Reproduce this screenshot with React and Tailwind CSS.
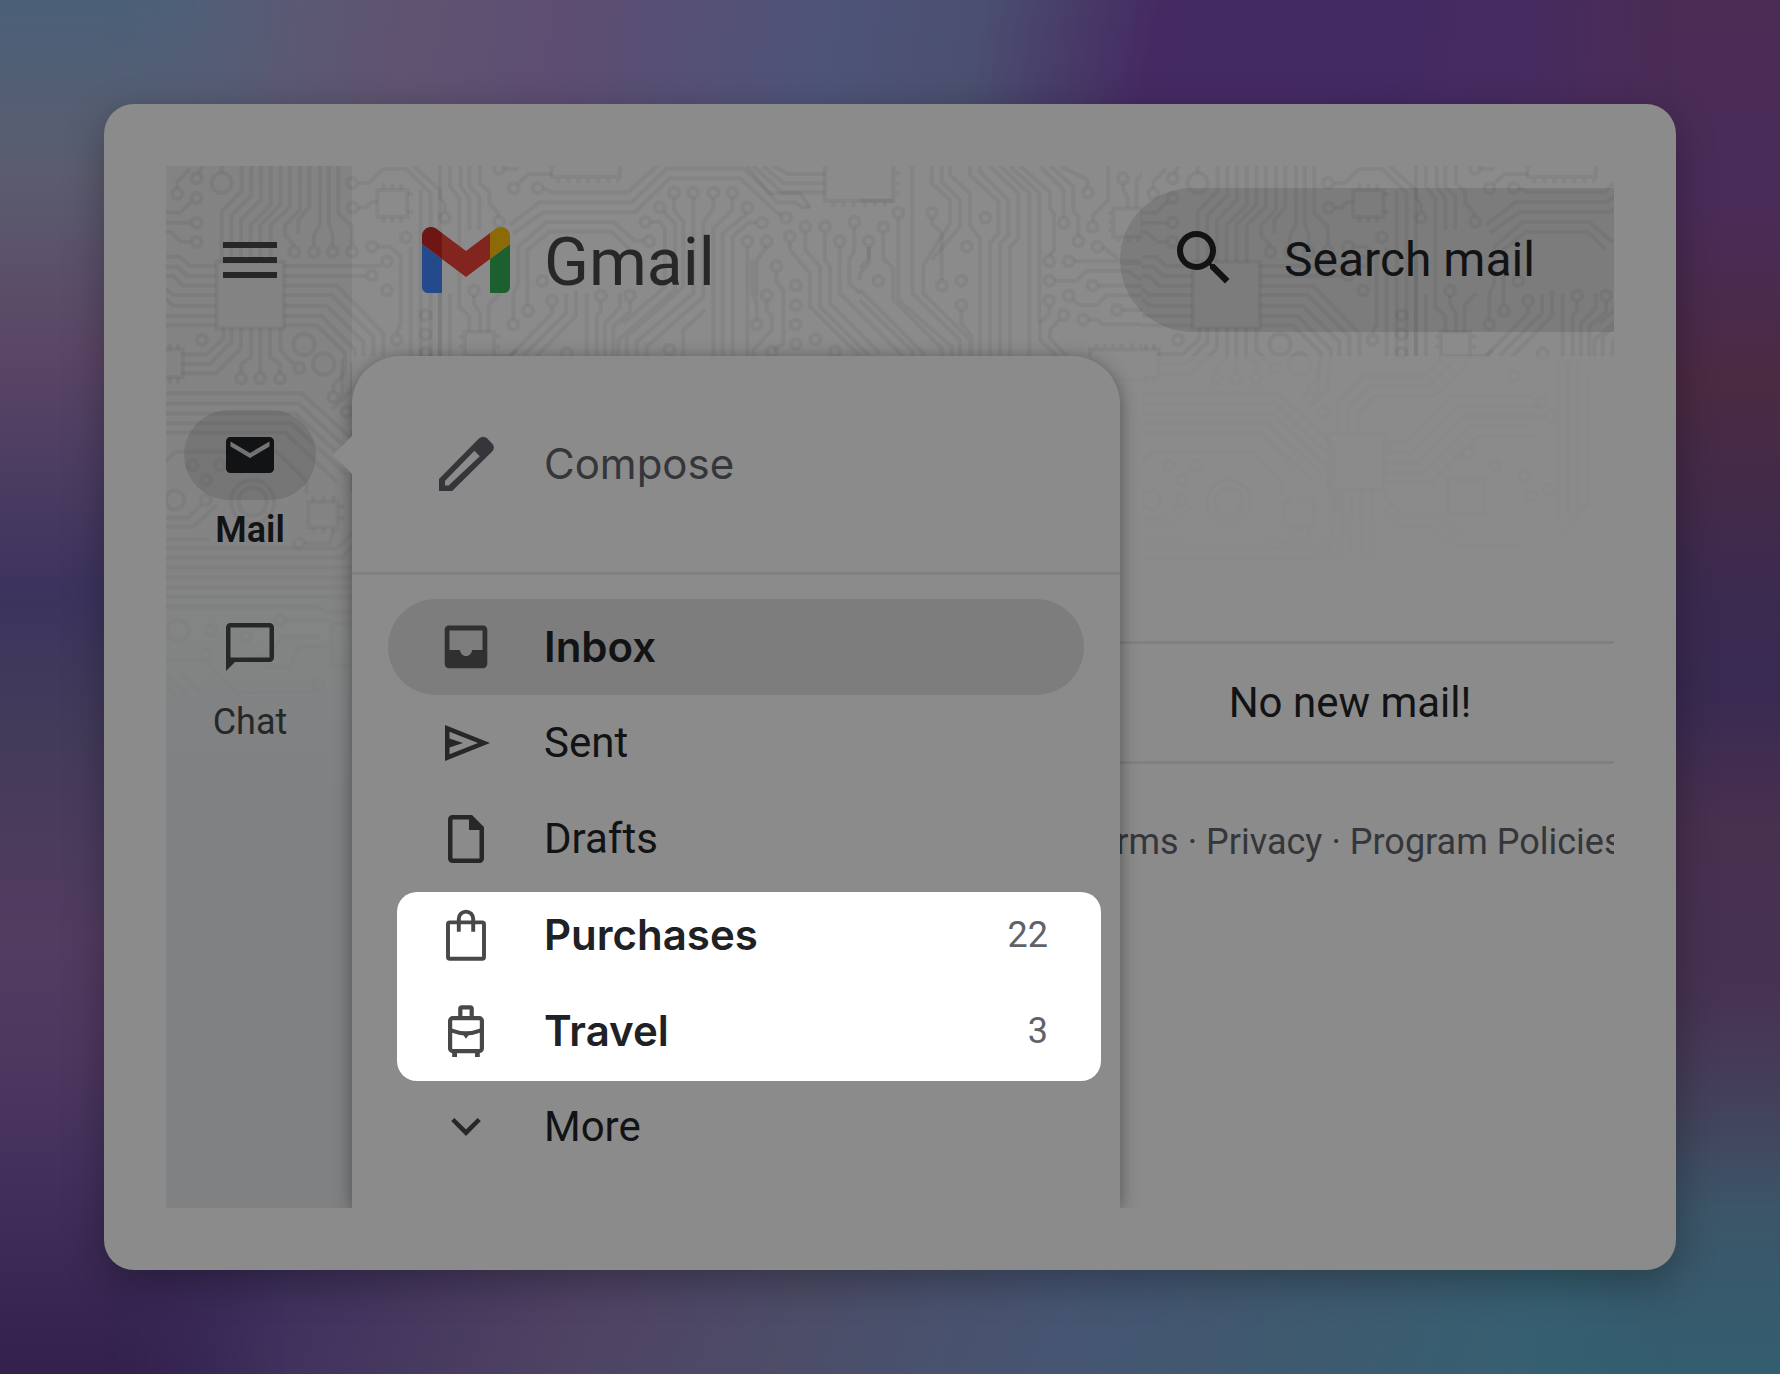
import { useState } from "react";

const menuItems = [
  { name: "Inbox", icon: InboxIcon },
  { name: "Sent", icon: SentIcon },
  { name: "Drafts", icon: DraftsIcon },
];

const highlighted = [
  { name: "Purchases", icon: PurchasesIcon, count: 22 },
  { name: "Travel", icon: TravelIcon, count: 3 },
];

function InboxIcon() {
  return (
    <svg viewBox="0 0 20 20" className="size-15 shrink-0 text-[#303030]" fill="currentColor" fillRule="evenodd">
      <path d="M4.3 2.8h11.4a1.4 1.4 0 0 1 1.4 1.4v11.5a1.4 1.4 0 0 1-1.4 1.4H4.3a1.4 1.4 0 0 1-1.4-1.4V4.2a1.4 1.4 0 0 1 1.4-1.4ZM4.5 4.5V11H8c0 1.1.9 2 2 2s2-.9 2-2h3.5V4.5Z" />
    </svg>
  );
}

function SentIcon() {
  return (
    <svg viewBox="0 0 20 20" className="size-15 shrink-0 text-[#262727]" fill="currentColor" fillRule="evenodd">
      <path d="M3 16V4l15 6L3 16Zm1.5-2.25L14 10 4.5 6.25V8.5L9 10l-4.5 1.5v2.25Z" />
    </svg>
  );
}

function DraftsIcon() {
  return (
    <svg viewBox="0 0 20 20" className="size-15 shrink-0 text-[#262727]" fill="currentColor" fillRule="evenodd">
      <path d="M5.5 2H12l4 4v10.5a1.5 1.5 0 0 1-1.5 1.5h-9A1.5 1.5 0 0 1 4 16.5v-13A1.5 1.5 0 0 1 5.5 2ZM11 3.5H5.5v13h9V7H11V3.5Z" />
    </svg>
  );
}

function PurchasesIcon() {
  return (
    <svg viewBox="0 0 20 20" className="size-15 shrink-0 text-[#474848]" fill="none" stroke="currentColor" strokeWidth="1.3">
      <rect x="4" y="5.8" width="12" height="12.1" rx=".6" />
      <path d="M7.6 8.9V4.6a2.4 2.4 0 0 1 4.8 0v4.3" />
    </svg>
  );
}

function TravelIcon() {
  return (
    <svg viewBox="0 0 20 20" className="size-15 shrink-0 text-[#474848]" fill="none" stroke="currentColor" strokeWidth="1.4">
      <rect x="4.7" y="5.7" width="10.6" height="11" rx=".9" />
      <path d="M8.1 5.7V2.6q0-.5.5-.5h2.8q.5 0 .5.5v3.1" />
      <path d="M5 9.8c1.6.6 3.3 1 5 1s3.4-.4 5-1" />
      <path d="m8.9 11.1 1.1 1.5 1.1-1.5Z" fill="currentColor" stroke="none" />
      <path d="M6.2 17v1.7M13.8 17v1.7" strokeWidth="1.6" />
    </svg>
  );
}

function ChevronIcon() {
  return (
    <svg viewBox="0 0 20 20" className="size-15 shrink-0 text-[#262727]" fill="none" stroke="currentColor" strokeWidth="1.5">
      <path d="M5.6 7.5 10 11.9l4.4-4.4" />
    </svg>
  );
}

function PencilIcon() {
  return (
    <svg viewBox="0 0 24 24" className="size-18 shrink-0" fill="currentColor" fillRule="evenodd">
      <path d="M3 21v-4L16.4 3.4q.6-.5 1.3-.5t1.3.5l1.7 1.8q.6.6.6 1.3t-.6 1.3L7.4 21ZM5 19.2h1.2l10.4-9.8-1.8-1.8L5 17.7Z" />
    </svg>
  );
}

function GmailLogo() {
  return (
    <svg viewBox="52 42 88 66" className="h-[66px] w-[88px] shrink-0">
      <path fill="#244a8c" d="M58 108h14V74L52 59v43c0 3.32 2.69 6 6 6" />
      <path fill="#1d6030" d="M120 108h14c3.32 0 6-2.69 6-6V59l-20 15" />
      <path fill="#8d6a08" d="M120 48v26l20-15v-8c0-7.42-8.47-11.65-14.4-7.2" />
      <path fill="#83251f" d="M72 74V48l24 18 24-18v26L96 92" />
      <path fill="#6e1613" d="M52 51v8l20 15V48l-5.6-4.2c-5.94-4.45-14.4-.22-14.4 7.2" />
    </svg>
  );
}

// Circuit board traces, drawn in five areas of one repeating tile
const traces = [
  {
    transform: "translate(-76 -76) scale(.33333)",
    lines: [
      "M262 294V275L300 235M325 250 340 228M395 228V248M305 335 270 368H228M303 398H228M303 456H275L240 425H228",
      "M455 228V302L395 365V515M484 228V316L424 377V515M513 228V330L453 390V515M542 228V345L482 405V515M571 228V345L511 405V515M600 228V350L542 407V515M630 228V360L585 407V435L613 467",
      "M658 228V350L625 390V430M690 228V405L672 435V467M717 228V405L728 435V467M745 228V370L786 410V467",
      "M228 500H270L300 528H380M228 530H262L292 558H380M228 558H250L278 587H380M228 597L250 615H380M228 626L250 647H380M228 678H380M228 706H380",
      "M582 528H873M582 558H829M582 587H740L880 730V798M582 615H725L850 740V798M582 647H710L820 755V798M582 678H695L795 780V840M582 706H680L765 790V850L730 885V905",
      "M400 715V745L350 793H275M425 715V755L360 822H275M453 715V775L378 850H275M483 715V800L453 825V848M511 715V848M540 715V800L570 825V848M571 715V780L610 822",
      "M803 279H835L880 237H950L1022 310V798M970 228 1050 300V798M805 353H825L845 337H862M863 470H900L932 500V700L920 730M962 470V798M992 300V798",
      "M862 300H952V380H862ZM380 515H582V715H380ZM228 778H278V862H228",
      "M880 298V280M907 298V280M934 298V280M880 382V398M907 382V398M934 382V398M952 312H968M952 365H968M240 862V880M264 862V880M240 778V762M264 778V762",
    ],
    circles: [[262, 311], [320, 265], [320, 324], [320, 398], [320, 456], [395, 279, 30], [613, 485], [672, 485], [728, 485], [786, 485], [891, 515], [846, 556], [336, 749], [642, 763, 32], [701, 822, 32], [453, 865], [511, 865], [570, 865], [628, 834], [786, 279], [788, 353], [846, 470], [920, 749], [891, 601]],
  },
  {
    transform: "translate(234 -16) scale(.33333)",
    lines: [
      "M120 48V140L135 165V185M150 48V110L178 145V470L208 500V545M182 48V110L208 145V240M208 48V110L238 140V240M240 48V100L268 125V160L295 190V200M120 300V618M150 430V618",
      "M314 56H355M352 103 385 72H455M430 114 455 127H685L770 48M330 225 418 157H695L800 55H1030L1110 130H1200L1230 172M340 250 430 187H705L808 85H1020L1130 187 1145 195M355 400V290L440 216H640L705 272H730",
      "M1040 48 1130 157H1185L1205 172H1230M1060 48 1145 127H1275M1090 48 1150 100H1275M1120 48 1165 72H1275",
      "M382 465V300L450 245H635L690 300M340 507V430L355 400M222 438V460L240 490V545M266 545V465L300 430M456 470V490L330 618M498 430V490L370 618M528 420V498L410 618M603 455V480L590 500V618M690 455V485L640 530V618M560 430V618M615 618V520L660 470V430",
      "M822 145V180L850 215V410L680 560V618M880 145V430L710 575V618M940 145V175L910 215V440L740 590V618M997 145V180L940 235V618M1042 190 968 250V618M1070 218H1045L998 260V618M790 185 825 220V420L655 570V618M753 216H780L795 235V410L670 520M1042 292V618",
      "M1100 292 1070 330V440M1129 365V395L1150 420V580L1120 600M1100 453V480L1115 500V540L1060 600V618M1070 507V460L1058 430V330M280 618H330L350 600M850 618V540L915 480",
      "M1170 278V300L1230 370V470L1380 618M1216 248V300L1260 350V470L1408 618M1275 248V330L1290 350V460L1440 610M1319 292V430L1380 490M1363 234V300L1348 330V400L1380 430M1407 292V340L1380 370V390",
      "M455 20H660V80H455ZM1480 152H1275V20M195 545H282V618H195ZM475 80V98M505 80V98M535 80V98M565 80V98M595 80V98M625 80V98M655 80V98M1300 152V170M1330 152V170M1360 152V170M195 560H178M195 590H178M282 560H300M282 590H300",
    ],
    circles: [[18, 262], [135, 203], [297, 216], [297, 56], [341, 116], [413, 114], [1158, 203], [748, 274], [384, 482], [340, 524], [222, 422], [456, 452], [603, 437], [690, 437], [427, 393], [77, 495], [77, 553], [77, 608], [500, 610], [808, 600], [822, 128], [880, 128], [940, 128], [997, 128], [1042, 173], [1086, 218], [779, 172], [736, 216], [1042, 274], [1100, 274], [1129, 348], [1100, 436], [1070, 524], [1187, 406], [1187, 466], [1187, 524], [1187, 582], [1246, 568], [1305, 605], [1115, 605], [1170, 260], [1216, 230], [1275, 230], [1363, 216], [1319, 274]],
  },
  {
    transform: "translate(694 -16) scale(.33333)",
    lines: [
      "M0 420 190 610V618M0 450 158 605V618M0 490 128 618M115 206V450L275 590V618M70 250V325L100 355V450L245 595V618M26 292V325L0 355M216 206V220L245 250V390M157 48V430L300 570V618",
      "M304 482V520L335 560V618M215 48V100L270 150V220L190 345V430L330 570V618M245 48V95L300 150V230L215 330M270 48V75L330 130V225L360 265V618M330 48V75L415 155V250L390 280V618M360 48V65L445 150V255L420 280V618M390 48 475 130V265L450 290V618M420 48 508 130V618M450 48 538 130V520",
      "M480 48 570 125V175L582 190V300L568 318M611 200V120L540 48M570 48 640 110V180L655 200V258M600 48 683 90V110M745 48V150L700 195V213M789 102V120L803 140V172M830 172V90L870 48M878 110V90L925 48M945 72 970 48",
      "M729 290 790 340H846M643 334H846M585 392H650L680 362H800L846 390M715 407H846M568 470V490L540 520V570L590 618M638 450 660 466H710L740 436H846M600 507 570 540V565L620 618M686 509H710L730 523H846M788 480H846",
      "M760 175H848V260H760ZM846 598H690V690H846M100 48V152H0M100 70H118M100 100H118M100 130H118M15 152V170M45 152V170M75 152V170M760 190H745M760 215H745M760 240H745M775 260V276M805 260V276M835 260V276M710 598V580M735 598V580M760 598V580M785 598V580M815 598V580M845 598V580",
    ],
    circles: [[115, 188], [70, 232], [26, 274], [55, 392], [216, 188], [246, 407], [376, 203], [320, 290], [304, 392], [304, 465], [568, 334], [611, 218], [655, 274], [684, 128], [698, 231], [789, 85], [878, 128], [712, 290], [626, 334], [568, 392], [698, 407], [568, 452], [626, 437], [611, 494], [669, 509], [771, 480]],
  },
  {
    transform: "translate(-16 224) scale(.33333)",
    lines: [
      "M48 10H455L620 160V300M48 40H445L606 190M48 70H435L600 225M48 100H425L590 255M48 127H405L560 275M48 215 75 185H380L470 275V310M48 383H115L155 343M48 410H130L200 345M48 447H180",
      "M48 475H560L630 410V300M48 503H575L650 430V300M48 532H700M48 562H700M48 592H700M48 620H700M48 650H500L530 665H700M463 460H540L550 420M475 335H563V412H475Z",
      "M490 335V318M520 335V318M550 335V318M490 412V430M520 412V430M550 412V430M563 350H582M563 385H582",
      "M400 690H540M300 800H360L395 740H510M340 830H420L450 770H530M545 700H650V830H545ZM48 850 250 1050M48 890 210 1050M90 850 290 1050M180 830 260 910H500M48 810H150L180 830",
    ],
    circles: [[128, 226], [210, 226], [168, 270], [168, 330], [75, 330, 28], [308, 335, 65], [308, 335, 42], [550, 22], [590, 65], [446, 460], [83, 722, 32], [183, 722], [168, 795], [288, 740], [505, 885], [390, 690]],
  },
  {
    transform: "translate(186 190) scale(.33333)",
    lines: [
      "M0 231H170V402H0ZM170 260H230L370 120H610M170 290H250L390 150H640M170 320H270L410 180H650M170 350H290L430 210H600M170 380H310L450 240H620",
      "M30 231V140L110 60H280L340 10M60 231V150L130 90H300L380 10M90 231V170L140 120H320L420 20M0 20V100L-60 160M-30 10V130M10 402V610M40 402V610M70 402V610M100 402V610M130 402V610",
      "M360 370H470V470H360ZM170 420 220 480H330L400 540H560M170 460 210 510H310L380 570H590M690 20V500M720 20V500M750 20V500M780 60V440L700 540",
    ],
    circles: [[640, 138], [668, 180], [420, 290], [500, 330], [590, 360], [660, 400], [560, 60], [610, 420]],
  },
];

function CircuitBackground() {
  return (
    <svg className="absolute inset-0 size-full" aria-hidden="true">
      <defs>
        <pattern id="circuit" width="976" height="620" patternUnits="userSpaceOnUse">
          <g fill="none" stroke="#000" strokeOpacity=".05">
            {traces.map((area) => (
              <g key={area.transform} transform={area.transform} strokeWidth="12">
                {area.lines.map((d) => (
                  <path key={d} d={d} />
                ))}
                {area.circles.map(([cx, cy, r = 15]) => (
                  <circle key={`${cx}-${cy}-${r}`} cx={cx} cy={cy} r={r} />
                ))}
              </g>
            ))}
          </g>
        </pattern>
        <linearGradient id="fade" x1="0" y1="0" x2="0" y2="1">
          <stop offset="0" stopColor="#fff" />
          <stop offset=".4" stopColor="#fff" stopOpacity=".8" />
          <stop offset="1" stopColor="#fff" stopOpacity="0" />
        </linearGradient>
        <mask id="railMask">
          <rect y="190" width="186" height="370" fill="url(#fade)" />
        </mask>
        <mask id="mainMask">
          <rect x="186" y="190" width="100%" height="240" fill="url(#fade)" opacity=".25" />
        </mask>
      </defs>
      <rect width="100%" height="190" fill="url(#circuit)" />
      <rect y="190" width="186" height="370" fill="url(#circuit)" mask="url(#railMask)" />
      <rect x="186" y="190" width="100%" height="240" fill="url(#circuit)" mask="url(#mainMask)" />
    </svg>
  );
}

function MenuRow({ item, selected, bold, onSelect }) {
  const Icon = item.icon;
  return (
    <button
      type="button"
      onClick={onSelect}
      className={`relative flex h-24 w-full items-center gap-12 rounded-full pr-9 pl-12 text-left
        ${selected ? "bg-[#7d7d7d]" : ""}
        ${item.count ? "text-[#202124]" : "text-[#121314]"}
      `}
    >
      <Icon />
      <span className={`flex-1 text-[42px] leading-[48px] ${bold ? "font-[Inter,sans-serif] font-semibold" : ""}`}>
        {item.name}
      </span>
      {item.count && <span className="text-4xl text-[#5f6368]">{item.count}</span>}
    </button>
  );
}

export default function App() {
  const [active, setActive] = useState("Inbox");

  return (
    <div className="relative flex min-h-screen bg-[linear-gradient(to_bottom,#4a6078,#5b5d70_12%,#5a4565_26%,#3c335e_43%,#433b5a_53%,#523c60_68%,#4f3860_76%,#43305c_85%,#33204c)] p-[104px] font-[Roboto,sans-serif]">
      {/* Backdrop colours on the right, top and bottom edges */}
      <div className="absolute inset-y-0 right-0 w-1/2 bg-[linear-gradient(to_bottom,#4a2c55,#4a2c5a_14%,#4b2a42_28%,#3c2a50_43%,#392a52_50%,#48304f_60%,#473253_72%,#44405a_80%,#3c5568_88%,#335e70)]" />
      <div className="absolute inset-x-0 top-0 h-[180px] bg-[linear-gradient(100deg,#4a6078,#546078_8%,#5f5470_22%,#5d4d73_32%,#4e5478_46%,#4b5070_54%,#452a62_64%,#432a62_78%,#4a2d5e_92%,#4a2c50)] [mask-image:linear-gradient(to_right,transparent_6%,#000_16%,#000_86%,transparent_94%)]" />
      <div className="absolute inset-x-0 bottom-0 h-[180px] bg-[linear-gradient(110deg,#33204c,#37295a_9%,#43355e_22%,#4f4363_34%,#4c4d68_46%,#465572_60%,#3d5b6f_76%,#356072_88%,#335e70)] [mask-image:linear-gradient(to_right,transparent_6%,#000_16%,#000_86%,transparent_94%)]" />

      <div className="relative flex min-w-0 flex-1 rounded-[30px] bg-[#8b8b8b] p-[62px] shadow-[0_12px_40px_rgba(0,0,0,0.3)]">
        <div className="relative flex min-w-0 flex-1 flex-col overflow-hidden">
          <div className="absolute inset-y-0 left-0 w-[186px] bg-[linear-gradient(to_bottom,#838383,#838484_45%,#7f8183_60%)]" />
          <CircuitBackground />

          <header className="relative flex h-[190px] items-center pb-[2px]">
            <div className="flex w-[186px] shrink-0 justify-center pr-[18px]">
              <button type="button" aria-label="Main menu">
                <svg viewBox="0 0 24 24" className="size-18 text-[#262727]" fill="currentColor">
                  <path d="M3 18h18v-2H3v2Zm0-5h18v-2H3v2Zm0-7v2h18V6H3Z" />
                </svg>
              </button>
            </div>
            <a href="#inbox" className="flex w-[768px] shrink-0 items-center gap-[34px] pl-[70px] text-[66px] leading-[72px] text-[#262727]">
              <GmailLogo />
              <span className="pt-[6px]">Gmail</span>
            </a>
            <label className="flex h-36 min-w-0 flex-1 items-center gap-11 rounded-l-full bg-black/10 pb-1 pl-12">
              <svg viewBox="0 0 24 24" className="size-18 shrink-0 text-[#121314]" fill="currentColor">
                <path d="M15.5 14h-.79l-.28-.27A6.471 6.471 0 0 0 16 9.5 6.5 6.5 0 1 0 9.5 16c1.61 0 3.09-.59 4.23-1.57l.27.28v.79l5 4.99L20.49 19l-4.99-5zm-6 0C7.01 14 5 11.99 5 9.5S7.01 5 9.5 5 14 7.01 14 9.5 11.99 14 9.5 14z" />
              </svg>
              <input
                type="text"
                aria-label="Search mail"
                placeholder="Search mail"
                className="min-w-0 flex-1 pt-1 text-5xl leading-[56px] text-[#121314] outline-none placeholder:text-[#121314]"
              />
            </label>
          </header>

          <div className="relative flex flex-1">
            {/* App rail */}
            <nav className="flex w-[186px] shrink-0 flex-col items-center gap-12 pt-[54px] pr-[18px] text-4xl leading-[48px]">
              <button type="button" className="flex flex-col items-center gap-[6px] text-[#121314]">
                <span className="flex h-[90px] w-[132px] items-center justify-center rounded-full bg-black/10">
                  <svg viewBox="0 0 20 20" className="size-15" fill="currentColor" fillRule="evenodd">
                    <path d="M3.5 4h13A1.5 1.5 0 0 1 18 5.5v9a1.5 1.5 0 0 1-1.5 1.5h-13A1.5 1.5 0 0 1 2 14.5v-9A1.5 1.5 0 0 1 3.5 4ZM3.5 5.5v1.7L10 11l6.5-3.8V5.5L10 9.3Z" />
                  </svg>
                </span>
                <span className="font-semibold">Mail</span>
              </button>
              <button type="button" className="flex flex-col items-center gap-[6px] text-[#262727]">
                <span className="flex h-[90px] w-[132px] items-center justify-center">
                  <svg viewBox="0 0 20 20" className="size-15" fill="currentColor" fillRule="evenodd">
                    <path d="M2 18V3.5A1.5 1.5 0 0 1 3.5 2h13A1.5 1.5 0 0 1 18 3.5v10a1.5 1.5 0 0 1-1.5 1.5H5l-3 3ZM3.5 13.5h13v-10h-13Z" />
                  </svg>
                </span>
                <span>Chat</span>
              </button>
            </nav>

            {/* Folder menu */}
            <aside className="relative z-10 w-[768px] shrink-0 rounded-t-[48px] bg-[#8b8b8b] shadow-[0_3px_18px_rgba(0,0,0,0.4)]">
              <svg viewBox="0 0 19 38" className="absolute top-20 -left-[19px] h-[38px] w-[19px] text-[#8b8b8b]" fill="currentColor">
                <path d="M19 0v38L0 19Z" />
              </svg>
              <button
                type="button"
                className="flex h-[219px] w-full items-center gap-[42px] border-b-3 border-[#808183] pl-[78px] font-[Inter,sans-serif] text-[42px] leading-[48px] text-[#35363a]"
              >
                <PencilIcon />
                Compose
              </button>
              <div className="px-9 pt-6">
                {menuItems.map((item) => (
                  <MenuRow
                    key={item.name}
                    item={item}
                    selected={active === item.name}
                    bold={item.name === "Inbox"}
                    onSelect={() => setActive(item.name)}
                  />
                ))}
                <div className="relative">
                  <div className="absolute top-[5px] -right-[17px] -bottom-[2px] left-[9px] rounded-[20px] bg-white" />
                  {highlighted.map((item) => (
                    <MenuRow key={item.name} item={item} bold onSelect={() => setActive(item.name)} />
                  ))}
                </div>
                <MenuRow item={{ name: "More", icon: ChevronIcon }} />
              </div>
            </aside>

            {/* Message list */}
            <main className="min-w-0 flex-1 overflow-hidden pt-[285px]">
              <p className="border-y-3 border-[#7f8181] py-[34px] pr-[34px] text-center text-[42px] leading-[49px] text-[#121314]">
                No new mail!
              </p>
              <div className="flex justify-center gap-[9px] pt-[54px] pr-[34px] text-4xl leading-[48px] whitespace-nowrap text-[#35363a]">
                <a href="#terms">Terms</a>
                <span>·</span>
                <a href="#privacy">Privacy</a>
                <span>·</span>
                <a href="#policies">Program Policies</a>
              </div>
            </main>
          </div>
        </div>
      </div>
    </div>
  );
}
